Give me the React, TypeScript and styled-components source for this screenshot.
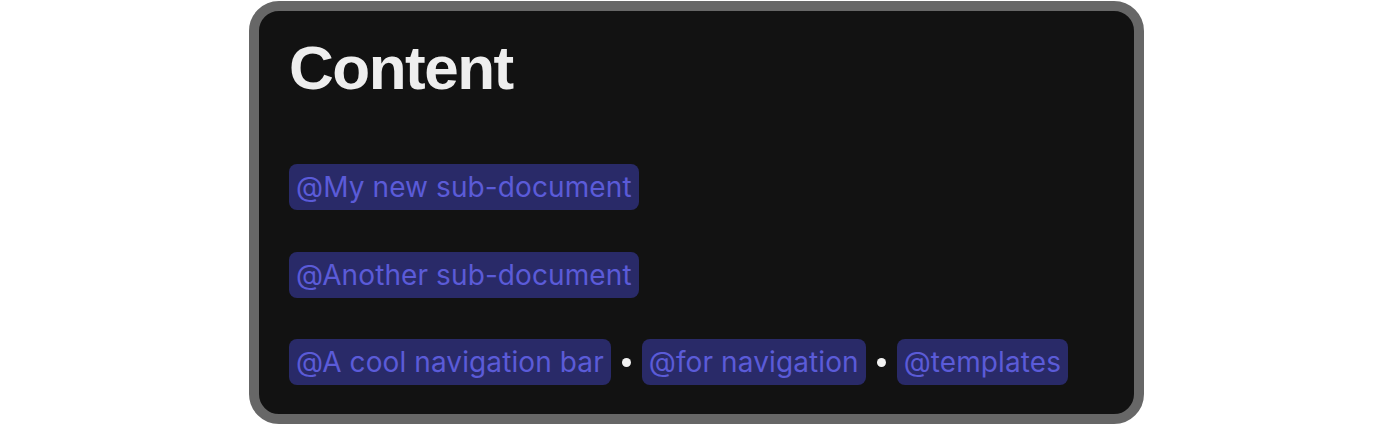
import React from "react";
import styled, { createGlobalStyle } from "styled-components";

const Global = createGlobalStyle`
  html, body { margin: 0; padding: 0; background: #ffffff; }
  body { font-family: "Inter", "Liberation Sans", sans-serif; }
`;

const Page = styled.div`
  display: flex;
  justify-content: center;
  padding-top: 1px;
`;

const Card = styled.div`
  box-sizing: border-box;
  width: 895px;
  height: 423px;
  background: #121212;
  border: 10px solid #676767;
  border-radius: 30px;
  padding: 22px 30px 0 30px;
  display: flex;
  flex-direction: column;
`;

const Title = styled.h1`
  margin: 0 0 61px 0;
  font-family: "Liberation Sans", Arial, sans-serif;
  font-weight: 700;
  font-size: 62px;
  line-height: 70px;
  letter-spacing: -1.5px;
  color: #eeeeee;
`;

const List = styled.div`
  display: flex;
  flex-direction: column;
  gap: 41.5px;
`;

const Row = styled.div`
  display: flex;
  align-items: center;
  gap: 11px;
`;

const Mention = styled.span`
  display: inline-flex;
  align-items: center;
  height: 46px;
  padding: 0 7px;
  border-radius: 8px;
  background: #292a68;
  color: #5b5bd8;
  font-family: "Inter", sans-serif;
  font-size: 28px;
  letter-spacing: 0.1px;
  line-height: 1;
`;

const Dot = styled.span`
  width: 9px;
  height: 9px;
  border-radius: 50%;
  background: #f2f2f2;
`;

export default function App() {
  const rows: string[][] = [
    ["My new sub-document"],
    ["Another sub-document"],
    ["A cool navigation bar", "for navigation", "templates"],
  ];
  return (
    <>
      <Global />
      <Page>
        <Card>
          <Title>Content</Title>
          <List>
            {rows.map((row, i) => (
              <Row key={i}>
                {row.map((m, j) => (
                  <React.Fragment key={m}>
                    {j > 0 && <Dot />}
                    <Mention>@{m}</Mention>
                  </React.Fragment>
                ))}
              </Row>
            ))}
          </List>
        </Card>
      </Page>
    </>
  );
}
